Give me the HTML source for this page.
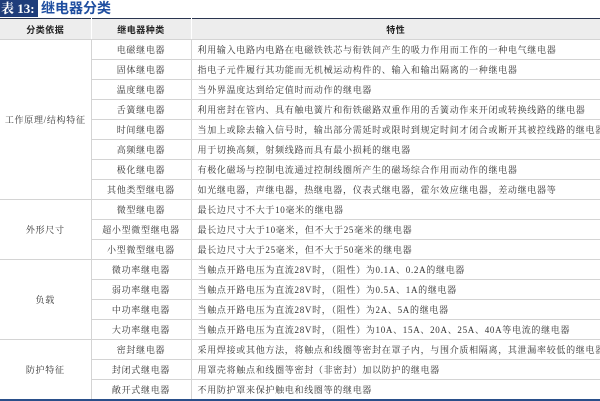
<!DOCTYPE html>
<html><head><meta charset="utf-8"><style>
*{margin:0;padding:0;box-sizing:border-box}
body{width:600px;height:400px;background:#fff;overflow:hidden;font-family:"Liberation Serif","Noto Serif CJK SC",serif;color:#333;position:relative}
.t1{position:absolute;left:0;top:0;height:17px;width:38px;background:#1f3d7a;color:#fff;font-weight:bold;font-size:13px;line-height:17px;padding-left:1px}
.t2{position:absolute;left:41px;top:0;height:17px;color:#1f4ea0;font-weight:bold;font-size:14px;line-height:17px;font-family:"Noto Sans CJK SC",sans-serif}
table{position:absolute;left:0;top:18px;width:600px;border-collapse:collapse;table-layout:fixed;font-size:9px;letter-spacing:0.7px}
td,th{border-bottom:1.5px solid #d4d4d4;height:20px;padding:0;white-space:nowrap;overflow:hidden}
th{background:#ededed;font-weight:bold;height:21px;font-family:"Noto Sans CJK SC",sans-serif;font-size:9px;letter-spacing:0.5px;color:#222;border-top:1.5px solid #2a3550}
td.c1,td.c2{text-align:center;border-right:1.5px solid #d4d4d4}
th.c1,th.c2{border-right:1.5px solid #fff}
td.c3{padding-left:6px}
tr.last td{border-bottom:2px solid #2a4f8a}
</style></head><body>
<div class="t1">表 13:</div><div class="t2">继电器分类</div>
<table>
<colgroup><col style="width:91px"><col style="width:100px"><col></colgroup>
<tr><th class="c1">分类依据</th><th class="c2">继电器种类</th><th>特性</th></tr>
<tr><td class="c1" rowspan="8">工作原理/结构特征</td><td class="c2">电磁继电器</td><td class="c3">利用输入电路内电路在电磁铁铁芯与衔铁间产生的吸力作用而工作的一种电气继电器</td></tr>
<tr><td class="c2">固体继电器</td><td class="c3">指电子元件履行其功能而无机械运动构件的、输入和输出隔离的一种继电器</td></tr>
<tr><td class="c2">温度继电器</td><td class="c3">当外界温度达到给定值时而动作的继电器</td></tr>
<tr><td class="c2">舌簧继电器</td><td class="c3">利用密封在管内、具有触电簧片和衔铁磁路双重作用的舌簧动作来开闭或转换线路的继电器</td></tr>
<tr><td class="c2">时间继电器</td><td class="c3">当加上或除去输入信号时，输出部分需延时或限时到规定时间才闭合或断开其被控线路的继电器</td></tr>
<tr><td class="c2">高频继电器</td><td class="c3">用于切换高频，射频线路而具有最小损耗的继电器</td></tr>
<tr><td class="c2">极化继电器</td><td class="c3">有极化磁场与控制电流通过控制线圈所产生的磁场综合作用而动作的继电器</td></tr>
<tr><td class="c2">其他类型继电器</td><td class="c3">如光继电器，声继电器，热继电器，仪表式继电器，霍尔效应继电器，差动继电器等</td></tr>
<tr><td class="c1" rowspan="3">外形尺寸</td><td class="c2">微型继电器</td><td class="c3">最长边尺寸不大于10毫米的继电器</td></tr>
<tr><td class="c2">超小型微型继电器</td><td class="c3">最长边尺寸大于10毫米，但不大于25毫米的继电器</td></tr>
<tr><td class="c2">小型微型继电器</td><td class="c3">最长边尺寸大于25毫米，但不大于50毫米的继电器</td></tr>
<tr><td class="c1" rowspan="4">负载</td><td class="c2">微功率继电器</td><td class="c3">当触点开路电压为直流28V时，（阻性）为0.1A、0.2A的继电器</td></tr>
<tr><td class="c2">弱功率继电器</td><td class="c3">当触点开路电压为直流28V时，（阻性）为0.5A、1A的继电器</td></tr>
<tr><td class="c2">中功率继电器</td><td class="c3">当触点开路电压为直流28V时，（阻性）为2A、5A的继电器</td></tr>
<tr><td class="c2">大功率继电器</td><td class="c3">当触点开路电压为直流28V时，（阻性）为10A、15A、20A、25A、40A等电流的继电器</td></tr>
<tr><td class="c1" rowspan="3" style="border-bottom:2px solid #2a4f8a">防护特征</td><td class="c2">密封继电器</td><td class="c3">采用焊接或其他方法，将触点和线圈等密封在罩子内，与围介质相隔离，其泄漏率较低的继电器</td></tr>
<tr><td class="c2">封闭式继电器</td><td class="c3">用罩壳将触点和线圈等密封（非密封）加以防护的继电器</td></tr>
<tr class="last"><td class="c2">敞开式继电器</td><td class="c3">不用防护罩来保护触电和线圈等的继电器</td></tr>
</table>
</body></html>
